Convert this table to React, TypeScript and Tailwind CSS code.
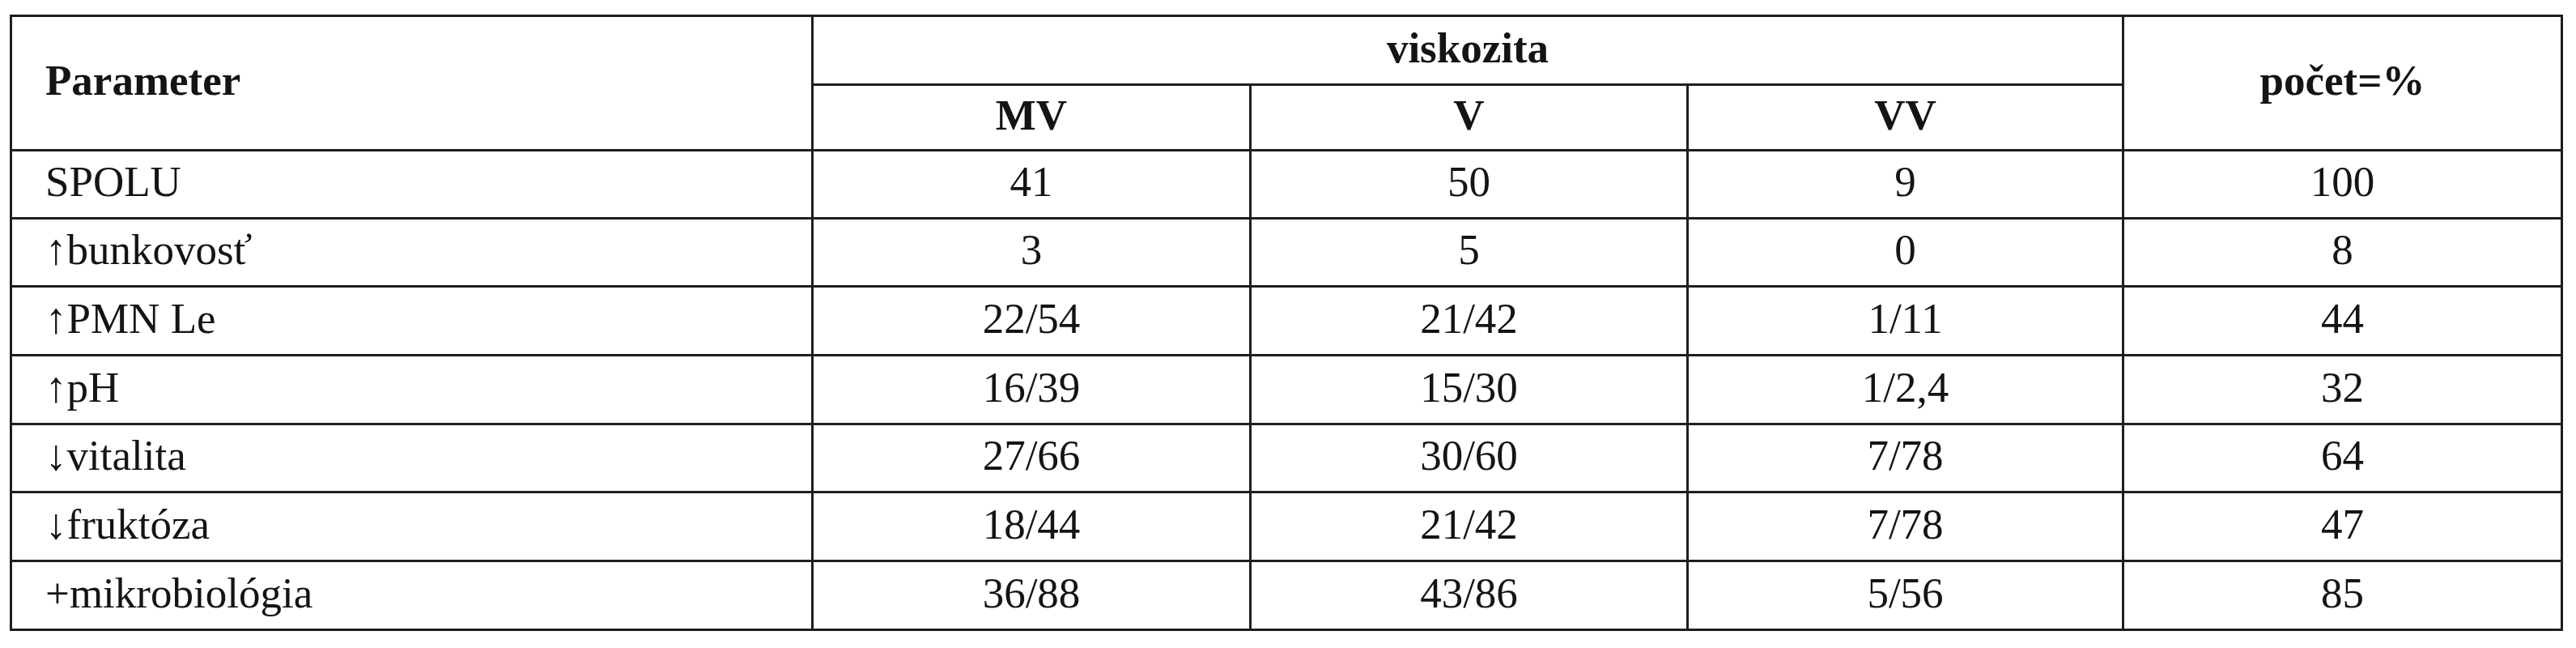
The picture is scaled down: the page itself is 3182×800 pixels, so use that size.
const rows: Array<{ label: string; mv: string; v: string; vv: string; pocet: string; tall?: boolean }> = [
  { label: 'SPOLU', mv: '41', v: '50', vv: '9', pocet: '100' },
  { label: '↑bunkovosť', mv: '3', v: '5', vv: '0', pocet: '8' },
  { label: '↑PMN Le', mv: '22/54', v: '21/42', vv: '1/11', pocet: '44', tall: true },
  { label: '↑pH', mv: '16/39', v: '15/30', vv: '1/2,4', pocet: '32', tall: true },
  { label: '↓vitalita', mv: '27/66', v: '30/60', vv: '7/78', pocet: '64' },
  { label: '↓fruktóza', mv: '18/44', v: '21/42', vv: '7/78', pocet: '47', tall: true },
  { label: '+mikrobiológia', mv: '36/88', v: '43/86', vv: '5/56', pocet: '85', tall: true },
]

export default function App() {
  const cell = 'border-[3px] border-[#1e1e1e] p-0 pb-[6px] align-middle leading-none'

  return (
    <div className="w-[3182px] h-[800px] bg-white pl-[12px] pt-[18px] font-['Liberation_Serif','Times_New_Roman',serif] text-[53px] text-[#141414]">
      <table className="border-collapse table-fixed w-[3151px]">
        <colgroup>
          <col className="w-[990px]" />
          <col className="w-[541px]" />
          <col className="w-[540px]" />
          <col className="w-[538px]" />
          <col className="w-[542px]" />
        </colgroup>
        <thead>
          <tr className="h-[85px]">
            <th rowSpan={2} className={`${cell} text-left pl-[41px] font-bold`}>
              Parameter
            </th>
            <th colSpan={3} className={`${cell} text-center font-bold`}>
              viskozita
            </th>
            <th rowSpan={2} className={`${cell} text-center font-bold`}>
              počet=%
            </th>
          </tr>
          <tr className="h-[81px]">
            <th className={`${cell} text-center font-bold`}>MV</th>
            <th className={`${cell} text-center font-bold`}>V</th>
            <th className={`${cell} text-center font-bold`}>VV</th>
          </tr>
        </thead>
        <tbody>
          {rows.map((r) => (
            <tr key={r.label} className={r.tall ? 'h-[85px]' : 'h-[84px]'}>
              <td className={`${cell} text-left pl-[41px]`}>{r.label}</td>
              <td className={`${cell} text-center`}>{r.mv}</td>
              <td className={`${cell} text-center`}>{r.v}</td>
              <td className={`${cell} text-center`}>{r.vv}</td>
              <td className={`${cell} text-center`}>{r.pocet}</td>
            </tr>
          ))}
        </tbody>
      </table>
    </div>
  )
}
